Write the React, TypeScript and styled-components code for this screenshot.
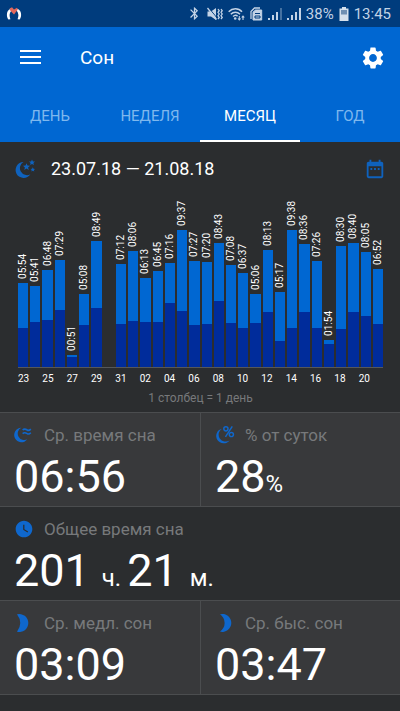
import React from 'react';
import styled, { createGlobalStyle } from 'styled-components';
import { MdBluetooth, MdDateRange, MdSettings, MdWatchLater } from 'react-icons/md';

const GlobalStyle = createGlobalStyle`
  *, *::before, *::after { box-sizing: border-box; }
  body {
    margin: 0;
    background: #2b2d2f;
    color: #fff;
    font-family: Roboto, "Noto Sans", sans-serif;
  }
  button { font: inherit; border: 0; padding: 0; background: none; color: inherit; cursor: pointer; }
`;

const Page = styled.div`
  min-height: 100vh;
  display: flex;
  flex-direction: column;
  background: #2b2d2f;
`;

const StatusBar = styled.div`
  height: 27px;
  padding: 0 9px 0 6px;
  display: flex;
  align-items: center;
  justify-content: space-between;
  background: #003c7d;
  color: #c3d3e6;
`;

const StatusGroup = styled.div`
  display: flex;
  align-items: center;
  gap: 5px;
`;

const StatusText = styled.span`
  font-size: 15px;
  line-height: 20px;
`;

const AppBar = styled.header`
  background: #0067d2;
`;

const Toolbar = styled.div`
  height: 62px;
  padding: 0 14px 0 18px;
  display: flex;
  align-items: center;
`;

const IconButton = styled.button`
  display: flex;
  align-items: center;
  justify-content: center;
  width: 26px;
  height: 26px;
`;

const Title = styled.h1`
  flex: 1;
  margin: 0 0 0 36px;
  font-size: 19px;
  line-height: 26px;
  font-weight: 400;
`;

const Tabs = styled.div`
  display: grid;
  grid-template-columns: repeat(4, 1fr);
`;

const Tab = styled.button<{ $active: boolean }>`
  && {
    height: 53px;
    padding-top: 2px;
    font-size: 15px;
    line-height: 20px;
    color: ${(p) => (p.$active ? '#fff' : '#7fb8ee')};
    border-bottom: 2px solid ${(p) => (p.$active ? '#fff' : 'transparent')};
  }
`;

const PeriodRow = styled.div`
  height: 54px;
  padding: 0 12px 0 15px;
  display: flex;
  align-items: center;
  gap: 14px;
  color: #0f62bd;
`;

const Period = styled.h2`
  flex: 1;
  margin: 0;
  font-size: 18px;
  line-height: 24px;
  font-weight: 400;
  color: #fff;
`;

const Chart = styled.div`
  padding: 0 17px 0 18px;
`;

const Bars = styled.div`
  height: 172px;
  display: grid;
  grid-template-columns: repeat(30, minmax(0, 1fr));
  column-gap: 2px;
  border-bottom: 1px solid #55585a;
`;

const Column = styled.div`
  display: flex;
  flex-direction: column;
  justify-content: flex-end;
  align-items: center;
`;

const BarLabel = styled.span`
  margin-bottom: 4px;
  writing-mode: vertical-rl;
  transform: rotate(180deg);
  font-size: 10px;
  line-height: 12px;
  white-space: nowrap;
`;

const Bar = styled.div`
  width: 100%;
  flex: none;
  display: flex;
  align-items: flex-end;
  background: #0067d2;
`;

const DeepPart = styled.div`
  width: 100%;
  background: #002c9b;
`;

const Axis = styled.div`
  display: grid;
  grid-template-columns: repeat(15, minmax(0, 1fr));
  padding-top: 4px;
`;

const AxisLabel = styled.span`
  font-size: 10px;
  line-height: 14px;
`;

const Caption = styled.p`
  margin: 4px 0 6px;
  text-align: center;
  font-size: 12px;
  line-height: 16px;
  color: #77797b;
`;

const Stats = styled.section`
  display: grid;
  grid-template-columns: repeat(2, 1fr);
  border-bottom: 1px solid #4b4d4f;
`;

const Card = styled.article<{ $wide?: boolean }>`
  grid-column: ${(p) => (p.$wide ? 'span 2' : 'auto')};
  padding: 10px 14px 3px;
  border-top: 1px solid #4b4d4f;
  background: ${(p) => (p.$wide ? '#2b2d2f' : '#38393b')};
  &:nth-child(2), &:nth-child(5) { border-left: 1px solid #4b4d4f; }
`;

const CardHead = styled.div`
  display: flex;
  align-items: center;
  gap: 10px;
  color: #0f67cc;
`;

const CardTitle = styled.h3`
  margin: 0;
  font-size: 17px;
  line-height: 24px;
  font-weight: 400;
  color: #77797b;
`;

const Value = styled.p`
  margin: 4px 0 0;
  font-size: 45px;
  line-height: 52px;
  white-space: pre;
`;

const Unit = styled.span`
  font-size: 24px;
  line-height: 24px;
`;

type Day = { date: string; time: string; deep: number };

const DAYS: Day[] = [
  { date: '23', time: '05:54', deep: 39 },
  { date: '24', time: '05:41', deep: 45 },
  { date: '25', time: '06:48', deep: 47 },
  { date: '26', time: '07:29', deep: 57 },
  { date: '27', time: '00:51', deep: 10 },
  { date: '28', time: '05:08', deep: 42 },
  { date: '29', time: '08:49', deep: 59 },
  { date: '30', time: '', deep: 0 },
  { date: '31', time: '07:12', deep: 43 },
  { date: '01', time: '08:06', deep: 46 },
  { date: '02', time: '06:13', deep: 45 },
  { date: '03', time: '06:45', deep: 45 },
  { date: '04', time: '07:16', deep: 64 },
  { date: '05', time: '09:37', deep: 56 },
  { date: '06', time: '07:27', deep: 42 },
  { date: '07', time: '07:20', deep: 43 },
  { date: '08', time: '08:43', deep: 66 },
  { date: '09', time: '07:08', deep: 44 },
  { date: '10', time: '06:37', deep: 39 },
  { date: '11', time: '05:06', deep: 44 },
  { date: '12', time: '08:13', deep: 55 },
  { date: '13', time: '05:17', deep: 26 },
  { date: '14', time: '09:38', deep: 39 },
  { date: '15', time: '08:36', deep: 55 },
  { date: '16', time: '07:26', deep: 39 },
  { date: '17', time: '01:54', deep: 23 },
  { date: '18', time: '08:30', deep: 38 },
  { date: '19', time: '08:40', deep: 55 },
  { date: '20', time: '08:05', deep: 51 },
  { date: '21', time: '06:52', deep: 43 },
];

const PIXELS_PER_HOUR = 14.27;

function barHeight(time: string) {
  const [hours, minutes] = time.split(':').map(Number);
  return Math.round((hours + minutes / 60) * PIXELS_PER_HOUR);
}

const LogoIcon = () => (
  <svg width="16" height="14" viewBox="0 0 16 14" aria-hidden="true">
    <path d="M4.6 1.8C.6 3.2-.2 8.6 2.4 12.6L4.4 12.2C3 8.6 3.400 5.400 6 3.200Z" fill="#fff" />
    <path d="M11.400 1.800C15.400 3.200 16.200 8.600 13.600 12.600L11.600 12.200C13 8.600 12.600 5.400 10 3.200Z" fill="#fff" />
    <path d="M3.600 1.400 6 .2 8 2.400 11 .8 11.800 2.600 8 7.400 4.200 3.400Z" fill="#e2685c" />
  </svg>
);

const MuteVibrateIcon = () => (
  <svg width="16" height="14" viewBox="0 0 16 14" fill="currentColor" aria-hidden="true">
    <path d="M.5 4.500H4L9 1V13L4 9.500H.5Z" />
    <path d="M1.500 .6 10.500 11.500" stroke="#003c7d" strokeWidth="1" />
    <path d="M.5 1 9.500 12.500" stroke="currentColor" strokeWidth="1.300" />
    <path d="M11 2l1.200 1.700L11 5.300l1.200 1.700L11 8.700l1.200 1.700L11 12M14 2l1.200 1.700L14 5.300 15.200 7 14 8.700l1.200 1.700L14 12" fill="none" stroke="currentColor" strokeWidth="1.300" />
  </svg>
);

const WifiIcon = () => (
  <svg width="17" height="14" viewBox="0 0 17 14" fill="none" stroke="currentColor" strokeWidth="1.500" aria-hidden="true">
    <path d="M.7 4.700C4.400.9 10.400.9 14 4.700M2.800 7.200C5.400 4.600 9.400 4.600 12 7.200M5 9.500C6.600 8 8.400 8 9.600 9.200" />
    <circle cx="7.200" cy="11.500" r="1.300" fill="currentColor" stroke="none" />
    <path d="M11.300 9v3.700M10 11.500l1.300 1.500 1.300-1.500M15 13V9.200M13.700 10.500 15 9l1.300 1.500" strokeWidth="1.100" />
  </svg>
);

const SimIcon = () => (
  <svg width="13" height="14" viewBox="0 0 13 14" fill="none" stroke="currentColor" aria-hidden="true">
    <path d="M1 12V4.500L4.500 1H10" strokeWidth="1.300" />
    <path d="M3 5.200 5.500 3H11.700V13H3Z" fill="currentColor" strokeWidth="1" />
    <path d="M5 6.500H10M5 9H10V11H5Z" stroke="#003c7d" strokeWidth="1" />
  </svg>
);

const SignalIcon = ({ full }: { full?: boolean }) => (
  <svg width="14" height="14" viewBox="0 0 14 14" fill="currentColor" aria-hidden="true">
    <path d="M0 11h2v2H0zM4 8h2v5H4zM8 5h2v8H8z" />
    <path d="M12 1h2v12h-2z" opacity={full ? 1 : 0.35} />
  </svg>
);

const BatteryIcon = () => (
  <svg width="10" height="14" viewBox="0 0 10 14" aria-hidden="true">
    <path d="M3 0h4v1.500h2.500V14H.5V1.500H3Z" fill="#d5e0ec" />
    <path d="M2 3h6v4.500H2Z" fill="#6f8fb2" />
  </svg>
);

const MenuIcon = () => (
  <svg width="22" height="16" viewBox="0 0 22 16" fill="#fff" aria-hidden="true">
    <path d="M0 0h21v2H0zM0 6h21v2H0zM0 12h21v2H0z" />
  </svg>
);

const StarMoonIcon = () => (
  <svg width="22" height="22" viewBox="0 0 22 22" fill="currentColor" aria-hidden="true">
    <path d="M8.500 4A8 8 0 1 0 15.400 16.200A6.800 6.800 0 0 1 8.500 4Z" />
    <path d="M11.500 5.200l1 2.300 2.500.3-1.900 1.600.6 2.500-2.200-1.400-2.200 1.400.6-2.500L8 7.800l2.500-.3Z" />
    <path d="M17 1.500l.9 1.900 2.100.2-1.600 1.400.5 2.100L17 6l-1.900 1.100.5-2.100L14 3.600l2.100-.2Z" />
    <path d="M17.800 9.300l.7 1.500 1.600.1-1.200 1.100.4 1.600-1.500-.9-1.500.9.4-1.600-1.200-1.100 1.600-.1Z" />
  </svg>
);

const WaveMoonIcon = () => (
  <svg width="20" height="20" viewBox="0 0 22 22" aria-hidden="true">
    <path d="M8 3A8 8 0 1 0 14.600 15.800A7 7 0 0 1 8 3Z" fill="currentColor" />
    <path d="M9.500 5.500c2-2 3.500-1 5 0s2.500.5 4-1M9.500 9.500c2-2 3.500-1 5 0s2.500.5 4-1" fill="none" stroke="currentColor" strokeWidth="1.700" />
  </svg>
);

const PercentMoonIcon = () => (
  <svg width="20" height="20" viewBox="0 0 22 22" aria-hidden="true">
    <path d="M7.500 4A8.200 8.200 0 1 0 16 17A7.500 7.500 0 0 1 7.500 4Z" fill="currentColor" />
    <g fill="none" stroke="currentColor" strokeWidth="1.600">
      <circle cx="12" cy="4.200" r="2.300" />
      <circle cx="18" cy="10.500" r="2.300" />
      <path d="M19 1.500 11.500 13" />
    </g>
  </svg>
);

const DeepMoonIcon = () => (
  <svg width="20" height="20" viewBox="0 0 20 20" fill="currentColor" aria-hidden="true">
    <path d="M3 1.300A9 9 0 1 1 3 18.700Q9.500 10 3 1.300Z" />
  </svg>
);

const LightMoonIcon = () => (
  <svg width="20" height="20" viewBox="0 0 20 20" fill="currentColor" aria-hidden="true">
    <path d="M5 1.200A9 9 0 1 1 5 18.600A10.500 10.500 0 0 0 5 1.200Z" />
  </svg>
);

const TABS = ['ДЕНЬ', 'НЕДЕЛЯ', 'МЕСЯЦ', 'ГОД'];

export default function App() {
  const [active, setActive] = React.useState('МЕСЯЦ');

  return (
    <Page>
      <GlobalStyle />
      <StatusBar>
        <LogoIcon />
        <StatusGroup>
          <MdBluetooth size={15} />
          <MuteVibrateIcon />
          <WifiIcon />
          <SimIcon />
          <SignalIcon />
          <SignalIcon full />
          <StatusText>38%</StatusText>
          <BatteryIcon />
          <StatusText>13:45</StatusText>
        </StatusGroup>
      </StatusBar>
      <AppBar>
        <Toolbar>
          <IconButton type="button" aria-label="Меню">
            <MenuIcon />
          </IconButton>
          <Title>Сон</Title>
          <IconButton type="button" aria-label="Настройки">
            <MdSettings size={26} />
          </IconButton>
        </Toolbar>
        <Tabs role="tablist">
          {TABS.map((tab) => (
            <Tab
              key={tab}
              type="button"
              role="tab"
              aria-selected={tab === active}
              $active={tab === active}
              onClick={() => setActive(tab)}
            >
              {tab}
            </Tab>
          ))}
        </Tabs>
      </AppBar>
      <main>
        <PeriodRow>
          <StarMoonIcon />
          <Period>23.07.18 — 21.08.18</Period>
          <IconButton type="button" aria-label="Выбрать даты">
            <MdDateRange size={22} />
          </IconButton>
        </PeriodRow>
        <Chart>
          <Bars>
            {DAYS.map((day) => (
              <Column key={day.date}>
                {day.time && (
                  <>
                    <BarLabel>{day.time}</BarLabel>
                    <Bar style={{ height: barHeight(day.time) }}>
                      <DeepPart style={{ height: day.deep }} />
                    </Bar>
                  </>
                )}
              </Column>
            ))}
          </Bars>
          <Axis>
            {DAYS.filter((_, i) => i % 2 === 0).map((day) => (
              <AxisLabel key={day.date}>{day.date}</AxisLabel>
            ))}
          </Axis>
          <Caption>1 столбец = 1 день</Caption>
        </Chart>
        <Stats>
          <Card>
            <CardHead>
              <WaveMoonIcon />
              <CardTitle>Ср. время сна</CardTitle>
            </CardHead>
            <Value>06:56</Value>
          </Card>
          <Card>
            <CardHead>
              <PercentMoonIcon />
              <CardTitle>% от суток</CardTitle>
            </CardHead>
            <Value>28<Unit>%</Unit></Value>
          </Card>
          <Card $wide>
            <CardHead>
              <MdWatchLater size={20} />
              <CardTitle>Общее время сна</CardTitle>
            </CardHead>
            <Value>201<Unit>  ч. </Unit>21<Unit>  м.</Unit></Value>
          </Card>
          <Card>
            <CardHead>
              <DeepMoonIcon />
              <CardTitle>Ср. медл. сон</CardTitle>
            </CardHead>
            <Value>03:09</Value>
          </Card>
          <Card>
            <CardHead>
              <LightMoonIcon />
              <CardTitle>Ср. быс. сон</CardTitle>
            </CardHead>
            <Value>03:47</Value>
          </Card>
        </Stats>
      </main>
    </Page>
  );
}
